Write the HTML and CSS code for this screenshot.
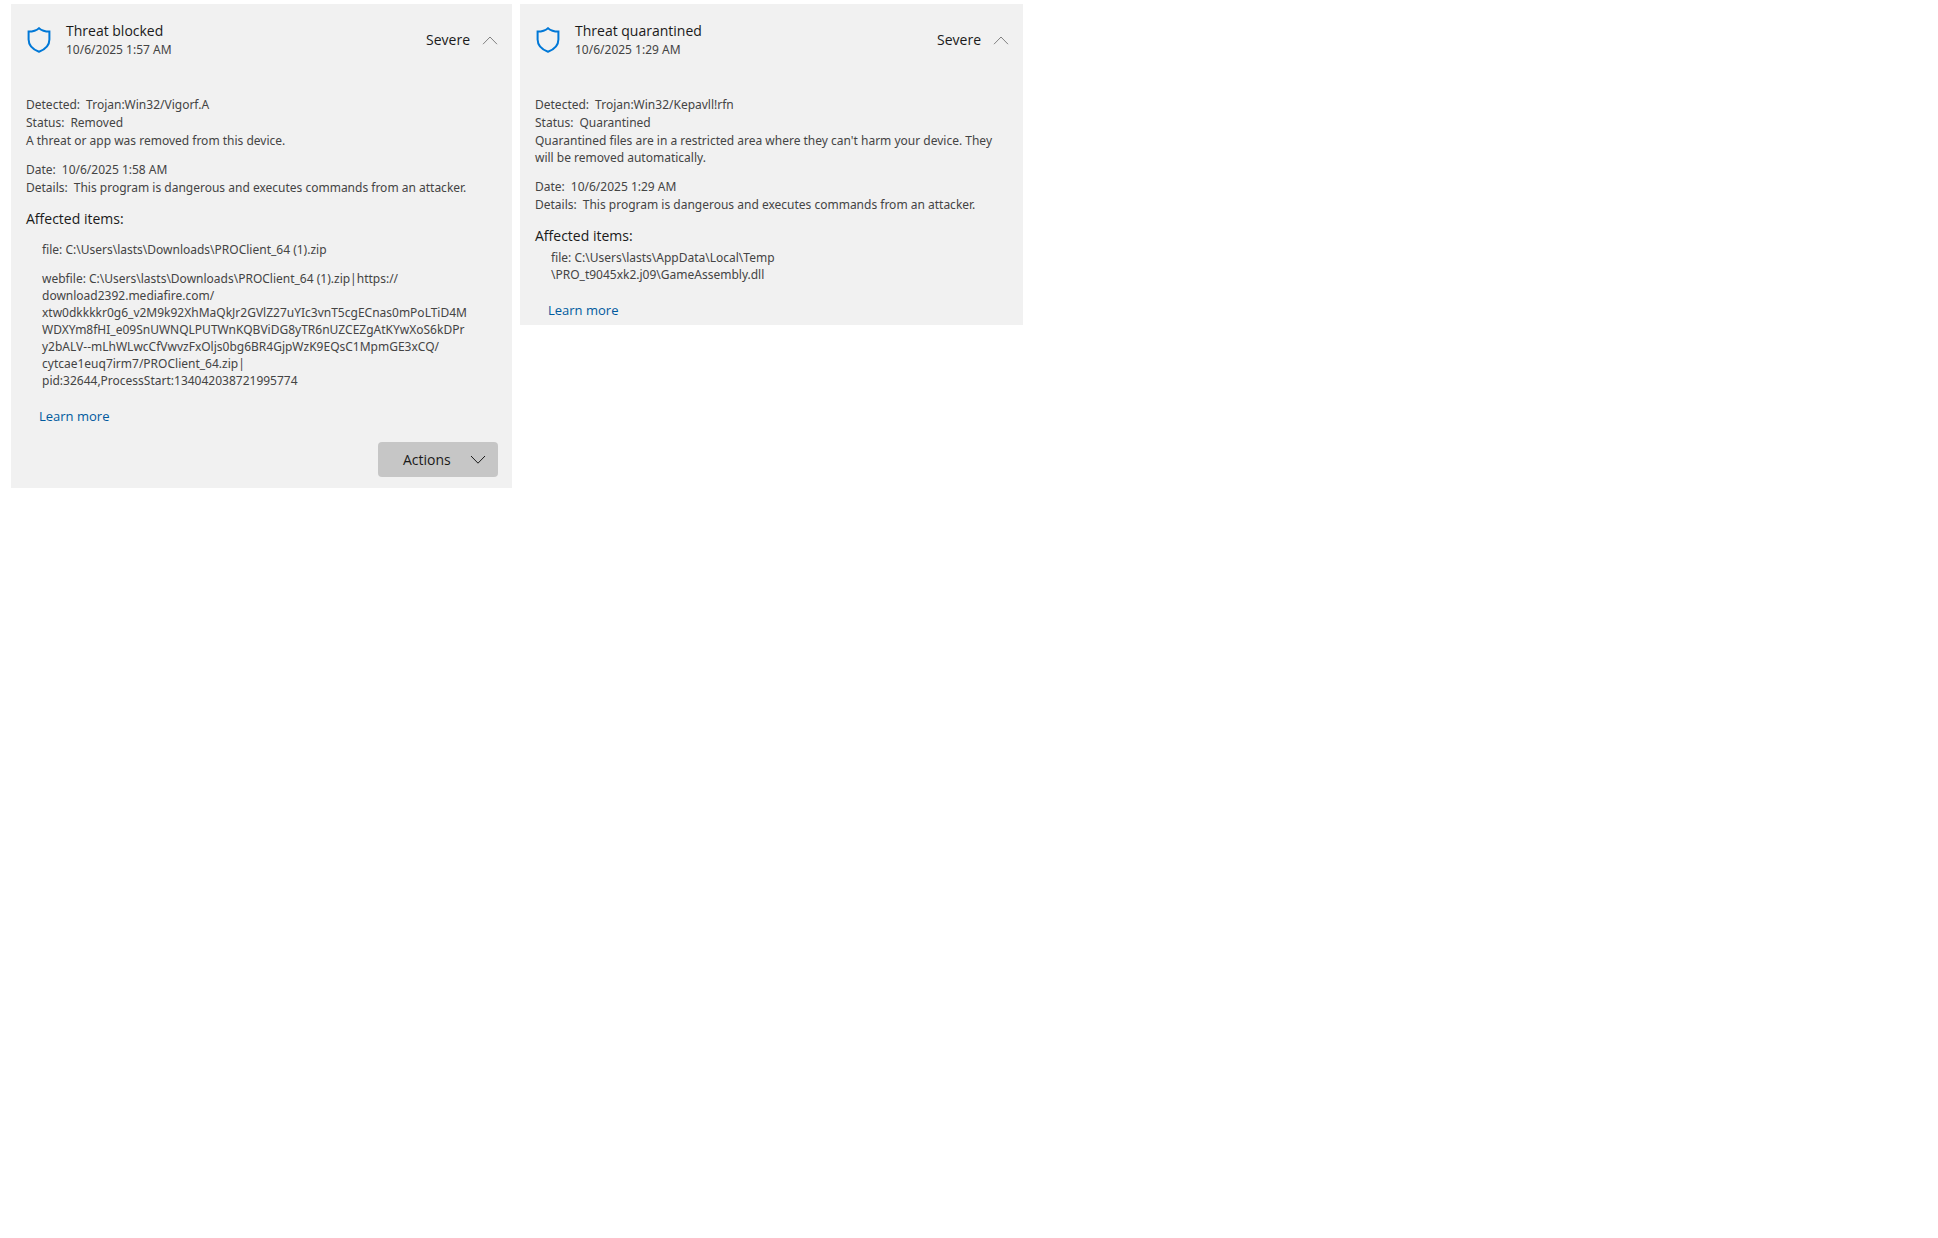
FILE: index.html
```html
<!DOCTYPE html>
<html lang="en">
<head>
  <meta charset="UTF-8" />
  <meta name="viewport" content="width=device-width, initial-scale=1.0"/>
  <title>Protection history</title>
  <link rel="stylesheet" href="styles.css">
</head>
<body>
  <main class="history">
    <section class="card">
      <div class="card-header">
        <svg class="shield" viewBox="0 0 24 26" aria-hidden="true">
          <path d="M12 1.2C9.4 3.5 5.8 4.6 1.6 4.6V12.5C1.6 18.5 5.5 22.3 12 24.8C18.5 22.3 22.4 18.5 22.4 12.5V4.6C18.2 4.6 14.6 3.5 12 1.2Z"/>
        </svg>
        <div class="heading">
          <h2>Threat blocked</h2>
          <p>10/6/2025 1:57 AM</p>
        </div>
        <span class="severity">Severe</span>
        <button class="toggle" type="button" aria-label="Collapse">
          <svg class="chevron" viewBox="0 0 16 9"><path d="M1 8.2L8 1L15 8.2"/></svg>
        </button>
      </div>

      <div class="info">
        <p><span class="label">Detected:</span>Trojan:Win32/Vigorf.A</p>
        <p><span class="label">Status:</span>Removed</p>
        <p class="note">A threat or app was removed from this device.</p>
      </div>
      <div class="info">
        <p><span class="label">Date:</span>10/6/2025 1:58 AM</p>
        <p><span class="label">Details:</span>This program is dangerous and executes commands from an attacker.</p>
      </div>

      <h3>Affected items:</h3>
      <ul class="items spaced">
        <li>file: C:\Users\lasts\Downloads\PROClient_64 (1).zip</li>
        <li>webfile: C:\Users\lasts\Downloads\PROClient_64 (1).zip|https://<br>download2392.mediafire.com/<br>xtw0dkkkkr0g6_v2M9k92XhMaQkJr2GVlZ27uYIc3vnT5cgECnas0mPoLTiD4M<br>WDXYm8fHI_e09SnUWNQLPUTWnKQBViDG8yTR6nUZCEZgAtKYwXoS6kDPr<br>y2bALV--mLhWLwcCfVwvzFxOljs0bg6BR4GjpWzK9EQsC1MpmGE3xCQ/<br>cytcae1euq7irm7/PROClient_64.zip|<br>pid:32644,ProcessStart:134042038721995774</li>
      </ul>

      <a class="learn" href="#">Learn more</a>
      <button class="actions" type="button">
        Actions
        <svg class="chevron" viewBox="0 0 16 9"><path d="M1 1L8 8.2L15 1"/></svg>
      </button>
    </section>

    <section class="card">
      <div class="card-header">
        <svg class="shield" viewBox="0 0 24 26" aria-hidden="true">
          <path d="M12 1.2C9.4 3.5 5.8 4.6 1.6 4.6V12.5C1.6 18.5 5.5 22.3 12 24.8C18.5 22.3 22.4 18.5 22.4 12.5V4.6C18.2 4.6 14.6 3.5 12 1.2Z"/>
        </svg>
        <div class="heading">
          <h2>Threat quarantined</h2>
          <p>10/6/2025 1:29 AM</p>
        </div>
        <span class="severity">Severe</span>
        <button class="toggle" type="button" aria-label="Collapse">
          <svg class="chevron" viewBox="0 0 16 9"><path d="M1 8.2L8 1L15 8.2"/></svg>
        </button>
      </div>

      <div class="info">
        <p><span class="label">Detected:</span>Trojan:Win32/Kepavll!rfn</p>
        <p><span class="label">Status:</span>Quarantined</p>
        <p class="note">Quarantined files are in a restricted area where they can't harm your device. They<br>will be removed automatically.</p>
      </div>
      <div class="info">
        <p><span class="label">Date:</span>10/6/2025 1:29 AM</p>
        <p><span class="label">Details:</span>This program is dangerous and executes commands from an attacker.</p>
      </div>

      <h3>Affected items:</h3>
      <ul class="items">
        <li>file: C:\Users\lasts\AppData\Local\Temp<br>\PRO_t9045xk2.j09\GameAssembly.dll</li>
      </ul>

      <a class="learn" href="#">Learn more</a>
    </section>
  </main>
</body>
</html>
```
FILE: styles.css
```css
* {
  box-sizing: border-box;
}
body {
  margin: 0;
  background: #ffffff;
  color: #444444;
  font-family: "Segoe UI", "Noto Sans", sans-serif;
  font-size: 12px;
  line-height: 18px;
}
h2, h3, p, ul {
  margin: 0;
  padding: 0;
  font-weight: 400;
}
h2, h3, .severity, .learn, .actions {
  font-family: "Segoe UI", "Open Sans", sans-serif;
}
.history {
  display: grid;
  grid-template-columns: minmax(0, 501px) minmax(0, 503px);
  align-items: start;
  gap: 8px;
  padding: 4px 11px;
}
.card {
  display: flex;
  flex-direction: column;
  background: #f1f1f1;
  padding: 16px 14px 4px 15px;
}
.card-header {
  display: flex;
  align-items: center;
  height: 40px;
  margin-bottom: 36px;
}
.shield {
  width: 24px;
  height: 26px;
  margin: 0 15px 0 1px;
  fill: none;
  stroke: #0078d7;
  stroke-width: 2;
}
.heading {
  flex: 1;
}
.heading h2 {
  line-height: 20px;
}
h2, h3, .severity {
  color: #1a1a1a;
  font-size: 14px;
}
.toggle {
  display: flex;
  margin-left: 12px;
  padding: 0;
  border: none;
  background: none;
  cursor: pointer;
}
.chevron {
  width: 16px;
  height: 9px;
  fill: none;
  stroke: #1a1a1a;
}
.toggle .chevron {
  stroke: #808080;
}
.info {
  margin-bottom: 12px;
}
.label {
  margin-right: 6px;
}
.note {
  line-height: 17px;
}
h3 {
  line-height: 20px;
}
.items {
  list-style: none;
  padding: 3px 0 0 16px;
  line-height: 17px;
  white-space: nowrap;
}
.items.spaced {
  padding-top: 12px;
}
.items.spaced li + li {
  margin-top: 12px;
}
.learn {
  align-self: flex-start;
  margin: 18px 0 2px 13px;
  color: #005a9e;
  font-size: 13px;
  text-decoration: none;
}
.actions {
  display: flex;
  align-items: center;
  align-self: flex-end;
  justify-content: space-between;
  width: 120px;
  height: 35px;
  margin: 15px 0 7px;
  padding: 0 12px 0 25px;
  border: none;
  border-radius: 4px;
  background: #c6c6c6;
  color: #1a1a1a;
  font-size: 14px;
  cursor: pointer;
}
```
